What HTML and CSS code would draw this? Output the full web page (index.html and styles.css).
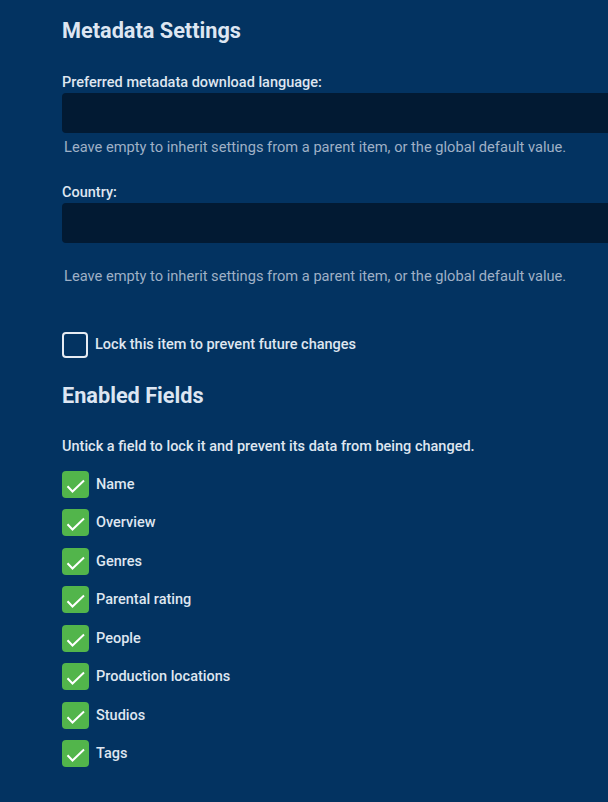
FILE: index.html
```html
<!DOCTYPE html>
<html>
<head>
<meta charset="utf-8">
<link rel="stylesheet" href="styles.css">
</head>
<body>
<div class="page">
  <h2 class="title">Metadata Settings</h2>
  <div class="field">
    <label class="label">Preferred metadata download language:</label>
    <div class="input"></div>
    <div class="help">Leave empty to inherit settings from a parent item, or the global default value.</div>
  </div>
  <div class="field field2">
    <label class="label">Country:</label>
    <div class="input"></div>
    <div class="help help2">Leave empty to inherit settings from a parent item, or the global default value.</div>
  </div>
  <div class="check-row lock">
    <span class="box empty"></span>
    <span class="check-label">Lock this item to prevent future changes</span>
  </div>
  <h2 class="title title2">Enabled Fields</h2>
  <p class="desc">Untick a field to lock it and prevent its data from being changed.</p>
  <div class="list">
    <div class="check-row"><span class="box on"><svg viewBox="0 0 27 27"><path d="M5.5 15.2L10.5 20.5L22 9.5"/></svg></span><span class="check-label">Name</span></div>
    <div class="check-row"><span class="box on"><svg viewBox="0 0 27 27"><path d="M5.5 15.2L10.5 20.5L22 9.5"/></svg></span><span class="check-label">Overview</span></div>
    <div class="check-row"><span class="box on"><svg viewBox="0 0 27 27"><path d="M5.5 15.2L10.5 20.5L22 9.5"/></svg></span><span class="check-label">Genres</span></div>
    <div class="check-row"><span class="box on"><svg viewBox="0 0 27 27"><path d="M5.5 15.2L10.5 20.5L22 9.5"/></svg></span><span class="check-label">Parental rating</span></div>
    <div class="check-row"><span class="box on"><svg viewBox="0 0 27 27"><path d="M5.5 15.2L10.5 20.5L22 9.5"/></svg></span><span class="check-label">People</span></div>
    <div class="check-row"><span class="box on"><svg viewBox="0 0 27 27"><path d="M5.5 15.2L10.5 20.5L22 9.5"/></svg></span><span class="check-label">Production locations</span></div>
    <div class="check-row"><span class="box on"><svg viewBox="0 0 27 27"><path d="M5.5 15.2L10.5 20.5L22 9.5"/></svg></span><span class="check-label">Studios</span></div>
    <div class="check-row"><span class="box on"><svg viewBox="0 0 27 27"><path d="M5.5 15.2L10.5 20.5L22 9.5"/></svg></span><span class="check-label">Tags</span></div>
  </div>
</div>
</body>
</html>
```
FILE: styles.css
```css
html, body {
  margin: 0;
  padding: 0;
  background: #033361;
  overflow: hidden;
}
body {
  font-family: Roboto, "Noto Sans", sans-serif;
  color: #dfe6f0;
  width: 608px;
  height: 802px;
}
.page {
  padding: 18px 0 0 62px;
  overflow: hidden;
}
.title {
  margin: 0;
  font-size: 21.7px;
  font-weight: 700;
  line-height: 26px;
  color: #dde6f2;
}
.field {
  margin-top: 31px;
  display: flex;
  flex-direction: column;
}
.field2 {
  margin-top: 30px;
}
.label {
  font-size: 14.5px;
  font-weight: 500;
  line-height: 16px;
  margin-bottom: 2px;
}
.input {
  width: 546px;
  height: 40px;
  background: #021a33;
  border-radius: 4px 0 0 4px;
}
.help {
  font-size: 14.65px;
  line-height: 16px;
  color: #9fb0c6;
  margin: 6px 0 0 2px;
}
.help2 {
  margin-top: 25px;
}
.check-row {
  display: flex;
  align-items: center;
  height: 27px;
  margin-bottom: 11.5px;
}
.lock {
  margin-top: 47px;
}
.box {
  width: 27px;
  height: 27px;
  box-sizing: border-box;
  border-radius: 4px;
  flex: none;
  display: flex;
  align-items: center;
  justify-content: center;
}
.box.empty {
  width: 26px;
  height: 26px;
  border: 2px solid #e6ebf2;
}
.box.on {
  background: #52b54b;
}
.box svg {
  width: 27px;
  height: 27px;
  fill: none;
  stroke: #ffffff;
  stroke-width: 2;
}
.check-label {
  margin-left: 7px;
  font-size: 14.5px;
  font-weight: 500;
  color: #dfe6f0;
}
.title2 {
  margin-top: 25px;
}
.desc {
  margin: 30px 0 15.5px;
  font-size: 14.5px;
  font-weight: 500;
  line-height: 16px;
}
```
